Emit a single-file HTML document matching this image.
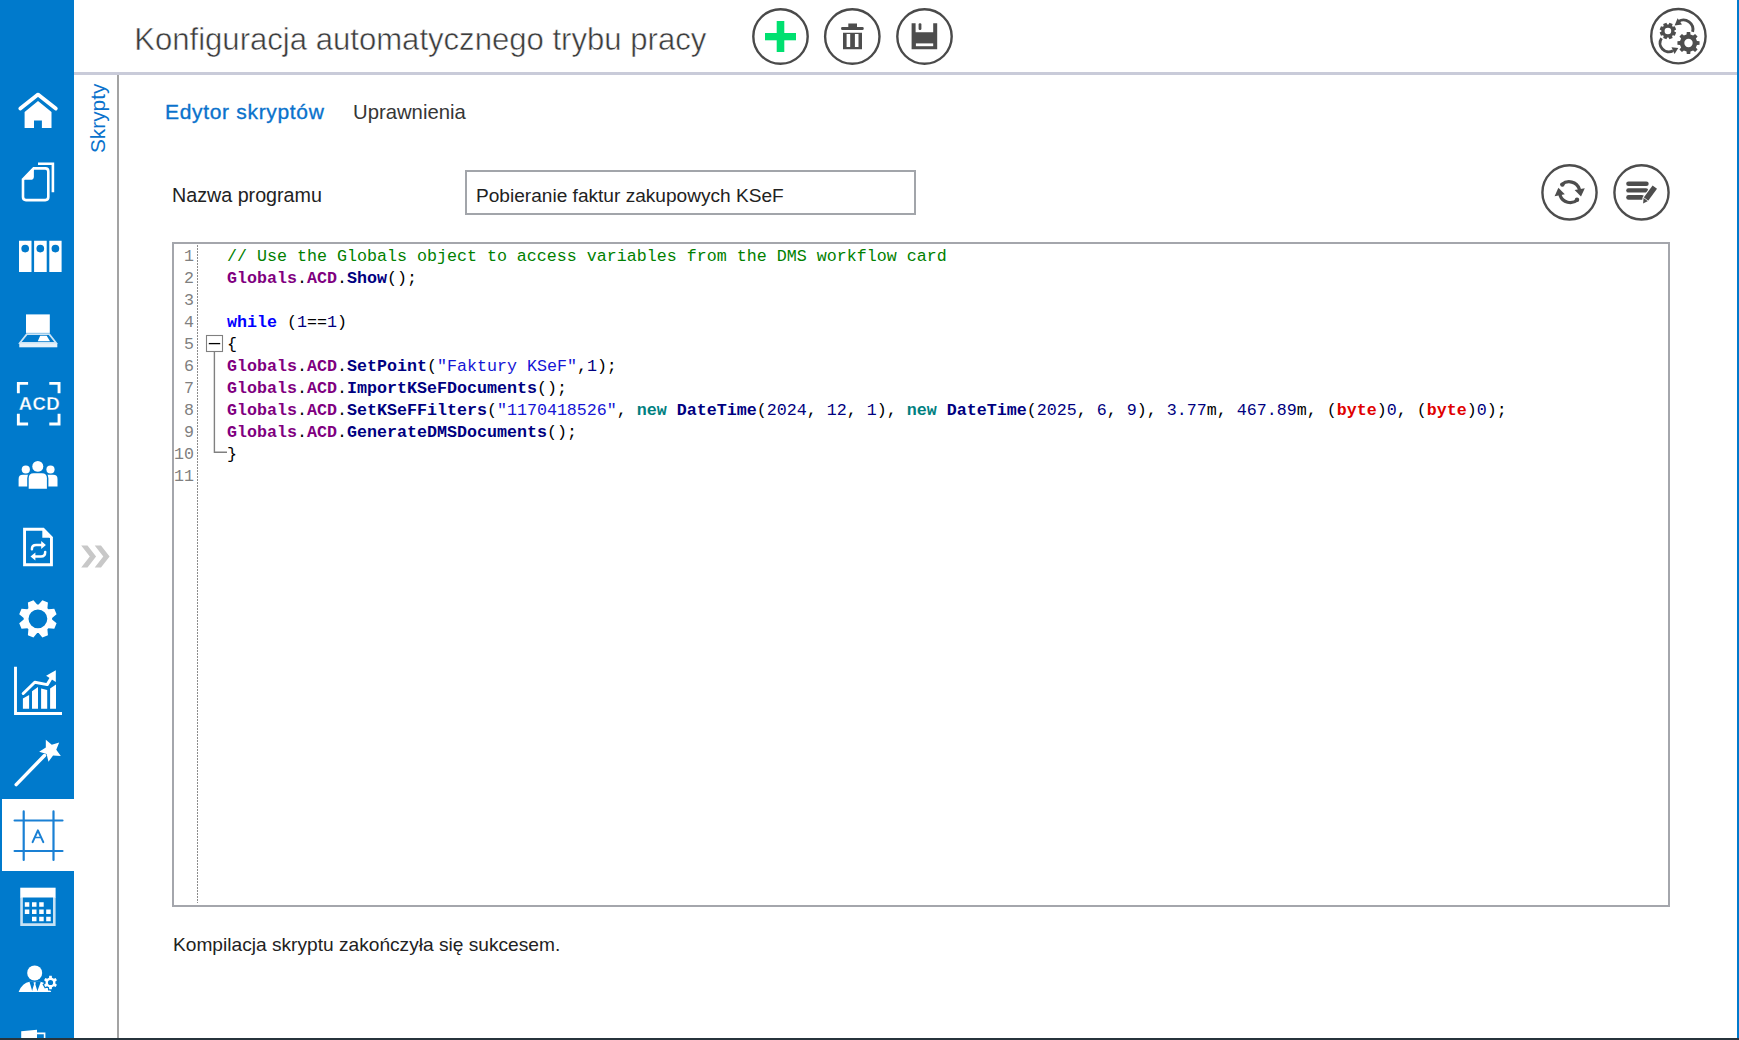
<!DOCTYPE html>
<html><head><meta charset="utf-8">
<style>
html,body{margin:0;padding:0;background:#fff;}
body{width:1739px;height:1040px;overflow:hidden;position:relative;font-family:"Liberation Sans",sans-serif;}
.a{position:absolute;}
.t{position:absolute;white-space:nowrap;font-family:"Liberation Sans",sans-serif;}
#side{left:0;top:0;width:74px;height:1038px;background:#007acc;}
#active{left:2px;top:799px;width:72px;height:72px;background:#fff;}
#hline{left:74px;top:72px;width:1663px;height:3px;background:#c9cbd9;}
#vsep{left:117px;top:75px;width:2px;height:963px;background:#a3a3a3;}
#rb{left:1737px;top:0;width:2px;height:1038px;background:#007acc;}
#bb{left:0;top:1038px;width:1739px;height:2px;background:#27343c;}
.code{position:absolute;left:227px;top:246px;font-family:"Liberation Mono",monospace;font-size:16.66px;line-height:22px;white-space:pre;color:#000;}
.ln{position:absolute;left:174px;top:245.8px;width:20px;text-align:right;font-family:"Liberation Mono",monospace;font-size:16.63px;line-height:22px;white-space:pre;color:#808080;}
.cm{color:#008000}
.cl{color:#800080;font-weight:bold}
.me{color:#000080;font-weight:bold}
.kw{color:#0000ff;font-weight:bold}
.nu{color:#000080}
.st{color:#1515d5}
.nw{color:#008080;font-weight:bold}
.by{color:#e00000;font-weight:bold}
</style></head>
<body>
<div id="side" class="a"></div>
<div id="active" class="a"></div>
<div id="hline" class="a"></div>
<div id="vsep" class="a"></div>
<div id="rb" class="a"></div>
<div id="bb" class="a"></div>

<!-- title -->
<div class="t" style="left:134.2px;top:24px;font-size:31.1px;line-height:31px;color:#3c3c3c;-webkit-text-stroke:0.5px #fff;">Konfiguracja automatycznego trybu pracy</div>

<!-- header buttons -->
<svg class="a" style="left:0;top:0" width="1739" height="75" viewBox="0 0 1739 75">
  <g fill="none" stroke="#4a4a4a" stroke-width="2.4">
    <circle cx="780.5" cy="36.5" r="27.2"/>
    <circle cx="852.3" cy="36.5" r="27.2"/>
    <circle cx="924.5" cy="36.5" r="27.2"/>
    <circle cx="1678.4" cy="36.2" r="27.2"/>
  </g>
  <g fill="#4d4d4d">
    <rect x="848.3" y="23.5" width="8.7" height="3.8"/>
    <rect x="841.1" y="26.9" width="22.6" height="3" rx="1.2"/>
    <path fill-rule="evenodd" d="M843,32.8 H862 V49.3 H843 Z M846.6,34.1 V47 H850.2 V34.1 Z M854.9,34.1 V47 H858.5 V34.1Z"/>
    <path d="M911.6,23.3 H915.6 V32.2 H933.2 V23.3 H937.2 V49.3 H911.6 Z"/>
    <rect x="918.6" y="23.3" width="2.8" height="6.6" rx="1.2"/>
    <path fill-rule="evenodd" d="M1668.52,24.53 L1669.43,22.74 L1672.66,24.08 L1672.03,25.98 L1672.92,26.87 L1674.82,26.24 L1676.16,29.47 L1674.37,30.38 L1674.37,31.62 L1676.16,32.53 L1674.82,35.76 L1672.92,35.13 L1672.03,36.02 L1672.66,37.92 L1669.43,39.26 L1668.52,37.47 L1667.28,37.47 L1666.37,39.26 L1663.14,37.92 L1663.77,36.02 L1662.88,35.13 L1660.98,35.76 L1659.64,32.53 L1661.43,31.62 L1661.43,30.38 L1659.64,29.47 L1660.98,26.24 L1662.88,26.87 L1663.77,25.98 L1663.14,24.08 L1666.37,22.74 L1667.28,24.53Z M1671.20,31.00 A3.3,3.3 0 1,0 1664.60,31.00 A3.3,3.3 0 1,0 1671.20,31.00Z"/>
    <path fill-rule="evenodd" d="M1686.54,34.52 L1686.75,31.94 L1690.25,31.94 L1690.46,34.52 L1693.11,35.62 L1695.08,33.94 L1697.56,36.42 L1695.88,38.39 L1696.98,41.04 L1699.56,41.25 L1699.56,44.75 L1696.98,44.96 L1695.88,47.61 L1697.56,49.58 L1695.08,52.06 L1693.11,50.38 L1690.46,51.48 L1690.25,54.06 L1686.75,54.06 L1686.54,51.48 L1683.89,50.38 L1681.92,52.06 L1679.44,49.58 L1681.12,47.61 L1680.02,44.96 L1677.44,44.75 L1677.44,41.25 L1680.02,41.04 L1681.12,38.39 L1679.44,36.42 L1681.92,33.94 L1683.89,35.62Z M1692.70,43.00 A4.2,4.2 0 1,0 1684.30,43.00 A4.2,4.2 0 1,0 1692.70,43.00Z"/>
    <polygon points="1674.6,25.4 1677.6,18.2 1682,24.6"/>
    <polygon points="1671.5,47.2 1678.3,48 1674.6,54"/>
  </g>
  <rect x="915.9" y="43.4" width="17.3" height="2.8" fill="#fff"/>
  <g fill="none" stroke="#4d4d4d" stroke-width="2.9">
    <path d="M1678.5,21.4 A9.5,9.5 0 0,1 1692.6,31.9"/>
    <path d="M1661.5,38.2 A8.8,8.8 0 0,0 1673.1,50.75"/>
  </g>
  <g fill="#00e070">
    <rect x="776.7" y="21" width="7.6" height="31"/>
    <rect x="765" y="33" width="31" height="7.3"/>
  </g>
</svg>

<!-- sidebar icons -->
<svg class="a" style="left:0;top:0" width="74" height="1038" viewBox="0 0 74 1038">
 <g fill="#fff">
  <!-- home -->
  <polyline points="20.3,108.6 38,94.6 55.8,108.6" fill="none" stroke="#fff" stroke-width="3.8" stroke-linecap="round" stroke-linejoin="round"/>
  <path d="M24.6,112 L38,100.9 L51.5,112 V128.1 H41.9 V120.4 H34 V128.1 H24.6Z"/>
  <!-- docs -->
  <path d="M23,179.3 L33.7,168.4 H45.3 Q48.3,168.4 48.3,171.4 V197.1 Q48.3,200.1 45.3,200.1 H26 Q23,200.1 23,197.1 Z" fill="none" stroke="#fff" stroke-width="2.6"/>
  <path d="M21.9,179.8 L33.9,167.2 V176.4 Q33.9,179.8 30.5,179.8 Z"/>
  <polyline points="38,163.7 52.9,163.7 52.9,192.3" fill="none" stroke="#fff" stroke-width="2.6"/>
  <!-- binders -->
  <path fill-rule="evenodd" d="M19,240.7 H31.5 V272.1 H19Z M34.1,240.7 H46.7 V272.1 H34.1Z M49.3,240.7 H61.6 V272.1 H49.3Z
    M29.05,248.6 A3.85,3.85 0 1,0 21.35,248.6 A3.85,3.85 0 1,0 29.05,248.6Z
    M44.15,248.6 A3.85,3.85 0 1,0 36.45,248.6 A3.85,3.85 0 1,0 44.15,248.6Z
    M59.25,248.6 A3.85,3.85 0 1,0 51.55,248.6 A3.85,3.85 0 1,0 59.25,248.6Z"/>
  <!-- laptop -->
  <rect x="26" y="314.4" width="23.8" height="18.5"/>
  <path d="M26.8,334.2 H49.2 L56,342.8 H20 Z" fill="none" stroke="#fff" stroke-opacity="0.8" stroke-width="1.8"/>
  <rect x="19.3" y="343.3" width="38" height="4" fill-opacity="0.9"/>
  <polygon points="40.2,335.8 46.7,335.8 50,341.3 37.8,341.3"/>
  <!-- ACD -->
  <path d="M18.35,393.3 V383.35 H28.1 M49.3,383.35 H59.05 V393.3 M18.35,413.8 V424.05 H28.1 M49.3,424.05 H59.05 V413.8" fill="none" stroke="#fff" stroke-width="2.9"/>
  <text x="39.4" y="409.8" text-anchor="middle" font-family="Liberation Sans" font-weight="bold" font-size="18.6" letter-spacing="0.3" stroke="#007acc" stroke-width="0.3">ACD</text>
  <!-- people -->
  <circle cx="37.8" cy="466.4" r="5.5"/>
  <circle cx="25.8" cy="469.5" r="4.1"/>
  <circle cx="50.5" cy="469.5" r="4.1"/>
  <path d="M18.6,486.6 V479 Q18.6,474.8 22.8,474.8 H30 V486.6Z"/>
  <path d="M57.5,486.6 V479 Q57.5,474.8 53.3,474.8 H46 V486.6Z"/>
  <path d="M28.7,488.8 V478.2 Q28.7,473.2 33.7,473.2 H41.9 Q46.9,473.2 46.9,478.2 V488.8 Z" fill="#007acc" stroke="#007acc" stroke-width="3"/>
  <path d="M28.7,488.8 V478.2 Q28.7,473.2 33.7,473.2 H41.9 Q46.9,473.2 46.9,478.2 V488.8 Z"/>
  <!-- doc arrows -->
  <path d="M24.55,529.25 H43.2 L51.45,537.5 V564.75 H24.55 Z" fill="none" stroke="#fff" stroke-width="2.9"/>
  <path d="M42.3,528 L52.9,537.8 H42.3 Z"/>
  <path d="M31.9,549.2 Q31.9,545.1 36.2,545.1 H42" fill="none" stroke="#fff" stroke-width="2.5" stroke-linecap="round"/>
  <polygon points="41.2,541 45.9,545.1 41.2,549"/>
  <path d="M45.2,551.9 Q45.2,556.4 41,556.4 H35" fill="none" stroke="#fff" stroke-width="2.5" stroke-linecap="round"/>
  <polygon points="35.4,552.4 30.5,556.4 35.4,560.4"/>
  <!-- gear -->
  <path fill-rule="evenodd" d="M38.64,604.62 L42.38,600.13 L47.93,602.43 L47.40,608.25 L48.45,609.30 L54.27,608.77 L56.57,614.32 L52.08,618.06 L52.08,619.54 L56.57,623.28 L54.27,628.83 L48.45,628.30 L47.40,629.35 L47.93,635.17 L42.38,637.47 L38.64,632.98 L37.16,632.98 L33.42,637.47 L27.87,635.17 L28.40,629.35 L27.35,628.30 L21.53,628.83 L19.23,623.28 L23.72,619.54 L23.72,618.06 L19.23,614.32 L21.53,608.77 L27.35,609.30 L28.40,608.25 L27.87,602.43 L33.42,600.13 L37.16,604.62Z M47.30,618.80 A9.4,9.4 0 1,0 28.50,618.80 A9.4,9.4 0 1,0 47.30,618.80Z"/>
  <!-- chart -->
  <path d="M15.5,666.8 V713.45 H62" fill="none" stroke="#fff" stroke-width="2.9"/>
  <polygon points="22.9,698.6 29.1,695.1 29.1,708.8 22.9,708.8"/>
  <polygon points="32,691.3 38,687 38,708.8 32,708.8"/>
  <polygon points="41.1,688.4 47.2,690 47.2,708.8 41.1,708.8"/>
  <polygon points="50.1,688.4 56,684.6 56,708.8 50.1,708.8"/>
  <polyline points="23.2,693.5 34.8,682.2 47.2,684.6 51.8,677" fill="none" stroke="#fff" stroke-width="3" stroke-linejoin="round" stroke-linecap="round"/>
  <polygon points="55.8,670.3 46.1,675.7 55.8,681.9"/>
  <!-- wand -->
  <line x1="16.2" y1="784.6" x2="44.5" y2="755.5" stroke="#fff" stroke-width="3.5" stroke-linecap="round"/>
  <polygon points="45.82,739.78 51.78,744.80 59.20,742.40 56.26,749.63 60.84,755.94 53.06,755.38 48.47,761.68 46.60,754.11 39.18,751.69 45.81,747.58"/>
  <!-- calendar -->
  <rect x="20.25" y="887.7" width="35.35" height="9.8"/>
  <path d="M21.55,897 V924.6 H54.3 V897" fill="none" stroke="#fff" stroke-opacity="0.78" stroke-width="2.6"/>
  <path d="M24.8,902.2h4.5v4.5h-4.5z M32,902.2h4.5v4.5h-4.5z M39.2,902.2h4.5v4.5h-4.5z
    M24.8,909.5h4.5v4.5h-4.5z M32,909.5h4.5v4.5h-4.5z M39.2,909.5h4.5v4.5h-4.5z M46.2,909.5h4.5v4.5h-4.5z
    M32,916.7h4.5v4.5h-4.5z M39.2,916.7h4.5v4.5h-4.5z M46.2,916.7h4.5v4.5h-4.5z"/>
  <!-- user gear -->
  <circle cx="34.7" cy="972.9" r="7.5"/>
  <path d="M18.6,991.9 Q22.5,982.6 29.6,981.8 H40.6 Q47,983 51.2,991.9 Z"/>
  <polygon points="29.4,981.4 40.9,981.4 37.4,991 32.2,991" fill="#007acc"/>
  <polygon points="33.6,982.3 35.8,982.3 35.4,984.6 37.3,990.8 34.7,991.9 32.1,990.8 34,984.6"/>
  <path d="M49.04,977.72 L49.20,975.82 L51.80,975.82 L51.96,977.72 L53.91,978.84 L55.63,978.04 L56.93,980.29 L55.37,981.38 L55.37,983.62 L56.93,984.71 L55.63,986.96 L53.91,986.16 L51.96,987.28 L51.80,989.18 L49.20,989.18 L49.04,987.28 L47.09,986.16 L45.37,986.96 L44.07,984.71 L45.63,983.62 L45.63,981.38 L44.07,980.29 L45.37,978.04 L47.09,978.84Z" fill="#007acc" stroke="#007acc" stroke-width="2.5"/>
  <path fill-rule="evenodd" d="M49.04,977.72 L49.20,975.82 L51.80,975.82 L51.96,977.72 L53.91,978.84 L55.63,978.04 L56.93,980.29 L55.37,981.38 L55.37,983.62 L56.93,984.71 L55.63,986.96 L53.91,986.16 L51.96,987.28 L51.80,989.18 L49.20,989.18 L49.04,987.28 L47.09,986.16 L45.37,986.96 L44.07,984.71 L45.63,983.62 L45.63,981.38 L44.07,980.29 L45.37,978.04 L47.09,978.84Z M53.10,982.50 A2.6,2.6 0 1,0 47.90,982.50 A2.6,2.6 0 1,0 53.10,982.50Z"/>
  <!-- bottom partial -->
  <polygon points="21.2,1031.2 37,1029.8 37,1038 21.2,1038"/>
  <path d="M37,1033.4 H44.6 V1038" fill="none" stroke="#fff" stroke-width="1.6"/>
 </g>
 <!-- active text-frame icon -->
 <g fill="none" stroke="#1a80d4" stroke-linecap="round">
  <path d="M23.7,811.4 V859.9 M53.5,811.4 V859.9 M14.6,820.5 H62.5 M14.6,851 H62.5" stroke-width="2.2"/>
  <polyline points="32.6,842.1 37.9,830.4 43.3,842.1" stroke-width="2" stroke-linejoin="round"/>
  <path d="M35.3,837.6 H40.5" stroke-width="1.5"/>
 </g>
</svg>
<!-- editor buttons -->
<svg class="a" style="left:1530px;top:155px" width="150" height="75" viewBox="1530 155 150 75">
  <g fill="none" stroke="#4d4d4d" stroke-width="2.6">
    <circle cx="1569.5" cy="192.4" r="27.1" stroke-width="2.4"/>
    <circle cx="1641.5" cy="192.4" r="27.1" stroke-width="2.4"/>
    <path d="M1561.9,184.5 A10.8,10.8 0 0,1 1579.3,189" stroke-width="3.2" stroke-linecap="round"/>
    <path d="M1577.5,199.9 A10.8,10.8 0 0,1 1560.1,195.4" stroke-width="3.2" stroke-linecap="round"/>
  </g>
  <g fill="#4d4d4d">
    <circle cx="1562.4" cy="184.6" r="2.2"/>
    <circle cx="1577.0" cy="199.8" r="2.2"/>
    <polygon points="1574.6,190.1 1584.8,188.2 1581,196.6"/>
    <polygon points="1564.8,194.3 1554.6,196.2 1558.4,187.8"/>
    <rect x="1626.2" y="181.4" width="22.5" height="4.6" rx="2.3"/>
    <rect x="1626.2" y="188.2" width="22" height="4.4" rx="2.2"/>
    <rect x="1626.2" y="195.1" width="18" height="4.6" rx="2.3"/>
    <polygon points="1643.1,203.4 1643.6,197.8 1652.6,185.5 1657,188.7 1648,201" stroke="#fff" stroke-width="2.2" stroke-linejoin="round"/>
    <polygon points="1643.1,203.4 1643.6,197.8 1652.6,185.5 1657,188.7 1648,201"/>
    <path d="M1643.2,197.3 L1648.9,201.5" stroke="#fff" stroke-width="0.8"/>
  </g>
</svg>
<!-- chevrons -->
<svg class="a" style="left:74px;top:540px" width="43" height="32" viewBox="74 540 43 32">
  <g fill="#c8c8c8">
    <polygon points="81.2,545.4 87.5,545.4 96.1,556.5 87.5,567.5 81.2,567.5 89.8,556.5"/>
    <polygon points="94.7,545.4 101,545.4 109.6,556.5 101,567.5 94.7,567.5 103.3,556.5"/>
  </g>
</svg>
<!-- tabs -->
<div class="t" style="left:165px;top:100.9px;font-size:21px;line-height:21px;color:#0a72cc;letter-spacing:0.68px;-webkit-text-stroke:0.35px #0a72cc;">Edytor skryptów</div>
<div class="t" style="left:353px;top:102.4px;font-size:20.3px;line-height:21px;color:#363636;">Uprawnienia</div>

<!-- Skrypty vertical -->
<div class="t" style="left:88px;top:153px;font-size:20.8px;line-height:20.8px;color:#0a72cc;transform-origin:0 0;transform:rotate(-90deg);">Skrypty</div>

<!-- program name -->
<div class="t" style="left:172px;top:185.8px;font-size:19.7px;line-height:19.7px;color:#222;">Nazwa programu</div>
<div class="a" style="left:465px;top:170px;width:447px;height:41px;border:2px solid #a2a5aa;"></div>
<div class="t" style="left:476px;top:185.8px;font-size:19.1px;line-height:19.1px;color:#222;">Pobieranie faktur zakupowych KSeF</div>

<!-- editor -->
<div class="a" style="left:172px;top:242px;width:1494px;height:661px;border:2px solid #a4a6ac;"></div>
<div class="a" style="left:197px;top:245px;width:1px;height:658px;background:repeating-linear-gradient(to bottom,#8c8c8c 0,#8c8c8c 2px,transparent 2px,transparent 3px);"></div>
<!-- fold markers -->
<svg class="a" style="left:200px;top:330px" width="40" height="130" viewBox="200 330 40 130">
  <rect x="206.5" y="335.5" width="16" height="16" fill="#fff" stroke="#808080" stroke-width="1.1"/>
  <path d="M208.8,343.6 H220.2" stroke="#000" stroke-width="1.3"/>
  <path d="M214.4,351.5 V452.3 H227" fill="none" stroke="#808080" stroke-width="1.4"/>
</svg>
<div class="ln">1
2
3
4
5
6
7
8
9
10
11</div>
<div class="code"><span class="cm">// Use the Globals object to access variables from the DMS workflow card</span>
<span class="cl">Globals</span>.<span class="cl">ACD</span>.<span class="me">Show</span>();

<span class="kw">while</span> (<span class="nu">1</span>==<span class="nu">1</span>)
{
<span class="cl">Globals</span>.<span class="cl">ACD</span>.<span class="me">SetPoint</span>(<span class="st">"Faktury KSeF"</span>,<span class="nu">1</span>);
<span class="cl">Globals</span>.<span class="cl">ACD</span>.<span class="me">ImportKSeFDocuments</span>();
<span class="cl">Globals</span>.<span class="cl">ACD</span>.<span class="me">SetKSeFFilters</span>(<span class="st">"1170418526"</span>, <span class="nw">new</span> <span class="me">DateTime</span>(<span class="nu">2024</span>, <span class="nu">12</span>, <span class="nu">1</span>), <span class="nw">new</span> <span class="me">DateTime</span>(<span class="nu">2025</span>, <span class="nu">6</span>, <span class="nu">9</span>), <span class="nu">3.77</span>m, <span class="nu">467.89</span>m, (<span class="by">byte</span>)<span class="nu">0</span>, (<span class="by">byte</span>)<span class="nu">0</span>);
<span class="cl">Globals</span>.<span class="cl">ACD</span>.<span class="me">GenerateDMSDocuments</span>();
}
</div>

<!-- status -->
<div class="t" style="left:173px;top:935.2px;font-size:19.15px;line-height:19.15px;color:#222;">Kompilacja skryptu zakończyła się sukcesem.</div>

</body></html>
